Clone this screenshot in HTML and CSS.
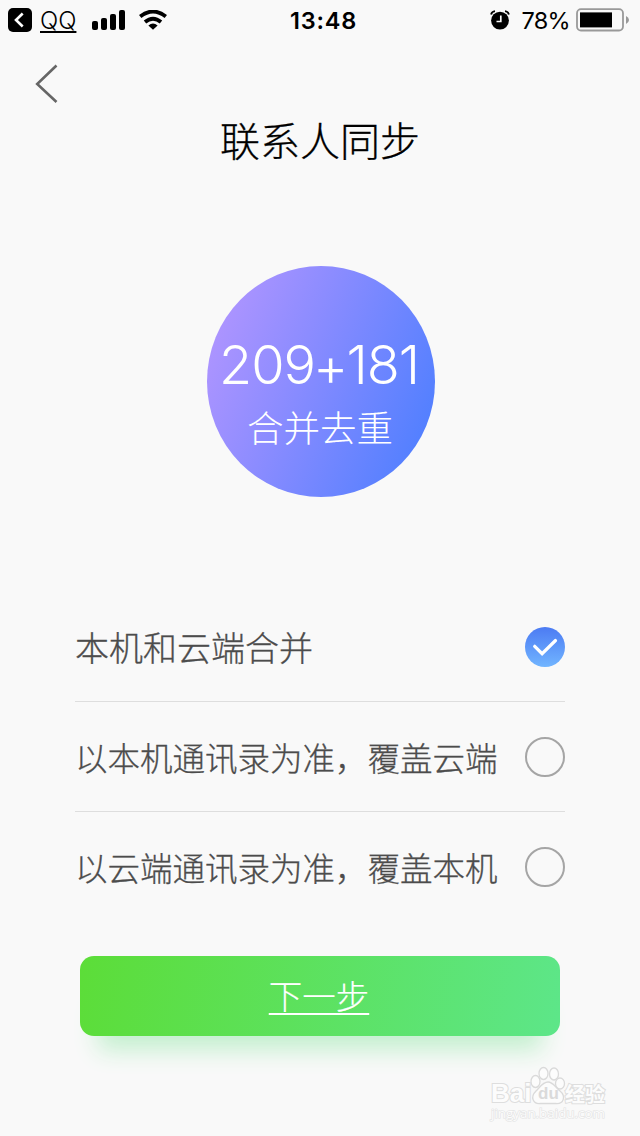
FILE: index.html
```html
<!DOCTYPE html>
<html lang="zh-CN">
<head>
  <meta charset="UTF-8">
  <meta name="viewport" content="width=device-width, initial-scale=1.0">
  <title>联系人同步</title>
  <link rel="stylesheet" href="styles.css">
</head>
<body>

  <div class="status">
    <div class="status-left">
      <svg class="icon-app" width="24" height="24" viewBox="0 0 24 24">
        <rect width="24" height="24" rx="5"/>
        <path d="M14.7 5.5L8 12l6.7 6.5" fill="none" stroke="#fff" stroke-width="2.6"/>
      </svg>
      <a class="qq">QQ</a>
      <svg class="icon-signal" width="34" height="20" viewBox="0 0 34 20">
        <rect x="0" y="11" width="6" height="9" rx="2"/>
        <rect x="9" y="8" width="6" height="12" rx="2"/>
        <rect x="18" y="4" width="6" height="16" rx="2"/>
        <rect x="27" y="0" width="6" height="20" rx="2"/>
      </svg>
      <svg class="icon-wifi" width="28" height="20" viewBox="0 0 28 20">
        <path d="M1.2 6.6Q14-3.6 26.8 6.6M6 12Q14 5.4 22 12" fill="none" stroke="#000" stroke-width="3.8"/>
        <path d="M9.4 15.4Q14 11.4 18.6 15.4L14 19.8Z"/>
      </svg>
    </div>
    <div class="time">13:48</div>
    <div class="status-right">
      <svg class="icon-alarm" width="20" height="20" viewBox="0 0 20 20">
        <circle cx="10" cy="10.6" r="8.9"/>
        <path d="M1 4.5Q2 1.6 5 1.2M15 1.2Q18 1.6 19 4.5" fill="none" stroke="#000" stroke-width="1.8"/>
        <path d="M10.8 5.5v6H6.5" fill="none" stroke="#f9f9f9" stroke-width="1.7"/>
      </svg>
      <span class="percent">78%</span>
      <svg class="icon-battery" width="54" height="24" viewBox="0 0 54 24">
        <rect x="1" y="1.2" width="46" height="21.3" rx="4" fill="none" stroke="#999" stroke-width="1.8"/>
        <rect x="4" y="4.4" width="32" height="15"/>
        <path d="M50 8q3 1.5 3 4t-3 4z" fill="#999"/>
      </svg>
    </div>
  </div>

  <div class="nav">
    <svg width="24" height="40" viewBox="0 0 24 40">
      <path d="M21.5 1.5L2.2 20l19.3 18" fill="none" stroke="#666" stroke-width="2.6"/>
    </svg>
  </div>

  <h1 class="title">联系人同步</h1>

  <div class="circle">
    <div class="count">209<span class="plus">+</span>181</div>
    <div class="label">合并去重</div>
  </div>

  <ul class="list">
    <li class="item item-first">
      <span>本机和云端合并</span>
      <i class="radio checked">
        <svg width="40" height="40" viewBox="0 0 40 40">
          <path d="M9.7 19.3l7.4 7.4L30.5 13.5" fill="none" stroke="#fff" stroke-width="3.2" stroke-linecap="round"/>
        </svg>
      </i>
    </li>
    <li class="item">
      <span>以本机通讯录为准，覆盖云端</span>
      <i class="radio"></i>
    </li>
    <li class="item">
      <span>以云端通讯录为准，覆盖本机</span>
      <i class="radio"></i>
    </li>
  </ul>

  <a class="btn"><span>下一步</span></a>

  <div class="watermark">
    <div class="mark-top">
      <span class="mark-bai">Bai</span>
      <span class="mark-paw">
        <svg width="38" height="40" viewBox="0 0 38 40">
          <ellipse cx="6.5" cy="16.5" rx="4.5" ry="6"/>
          <ellipse cx="14.5" cy="8.5" rx="4.5" ry="6"/>
          <ellipse cx="25" cy="9" rx="4.5" ry="6"/>
          <ellipse cx="31" cy="18.5" rx="4.5" ry="5.5"/>
          <path d="M19 17C14 17 11 22 7 26C1 32 4 39 11 38.5H27C35 39 37 31 31 26C26 22 24 17 19 17Z"/>
        </svg>
        <span class="mark-du">du</span>
      </span>
      <span class="mark-cn">经验</span>
    </div>
    <div class="mark-url">jingyan.baidu.com</div>
  </div>

</body>
</html>
```
FILE: styles.css
```css
*{
  margin:0;
  padding:0;
  box-sizing:border-box;
}
body{
  position:relative;
  width:640px;
  height:1136px;
  overflow:hidden;
  background:#f9f9f9;
  font-family:"Noto Sans CJK SC", sans-serif;
  font-weight:300;
  color:#000;
}
svg{
  display:block;
}

/* 状态栏 */
.status{
  display:grid;
  grid-template-columns:1fr auto 1fr;
  align-items:center;
  height:40px;
  padding:0 10px 0 8px;
  font-family:Inter, "Liberation Sans", sans-serif;
  font-size:24px;
  line-height:38px;
}
.status-left,
.status-right{
  display:flex;
  align-items:center;
}
.status-right{
  justify-content:flex-end;
}
.qq{
  width:36px;
  margin:0 16px 0 8px;
  padding-top:1px;
  text-decoration:underline;
  text-decoration-thickness:2px;
  text-underline-offset:2px;
  white-space:nowrap;
}
.icon-wifi{
  margin-left:13px;
}
.time{
  padding:1px 0 0 9px;
  font-size:23.5px;
  font-weight:600;
  letter-spacing:.8px;
}
.percent{
  margin:0 6px 0 12px;
  padding-top:2px;
  font-size:23.5px;
  font-weight:400;
  letter-spacing:-.7px;
}

.nav{
  height:64px;
  padding:24px 0 0 35px;
}
.title{
  margin-top:5px;
  font-size:40px;
  font-weight:300;
  line-height:60px;
  text-align:center;
  -webkit-text-stroke:.3px;
}

/* 圆 */
.circle{
  width:228px;
  height:231px;
  margin:97px auto 0 207px;
  padding-top:69px;
  border-radius:50%;
  background:linear-gradient(112deg, #b496ff 4%, #8c8cff 40%, #4b7eff 96%);
  color:#fff;
  text-align:center;
}
.count{
  padding-right:4px;
  font-family:Inter, sans-serif;
  font-size:54px;
  font-weight:300;
  line-height:60px;
  letter-spacing:-1px;
  white-space:nowrap;
}
.plus{
  display:inline-block;
  margin:0 -1px 0 -2px;
  transform:translateY(2px);
}
.label{
  margin-top:5px;
  padding-right:2px;
  font-size:36.5px;
  line-height:54px;
}

/* 选项 */
.list{
  margin:95px 75px 0;
  list-style:none;
}
.item{
  display:flex;
  align-items:center;
  justify-content:space-between;
  height:110px;
  border-bottom:1px solid #dedede;
  color:#4c4c4c;
  font-size:32.5px;
  white-space:nowrap;
}
.item span{
  -webkit-text-stroke:.3px;
}
.item-first{
  font-size:34px;
}
.item:last-child{
  border-bottom-color:transparent;
}
.radio{
  flex:none;
  width:40px;
  height:40px;
  border:2px solid #a5a5a5;
  border-radius:50%;
}
.checked{
  border:none;
  background:linear-gradient(#4c7bf3, #71b5ff);
}

.btn{
  display:block;
  position:relative;
  width:480px;
  height:80px;
  margin:34px auto 0;
  border-radius:14px;
  background:linear-gradient(100deg, #5cdd38, #5de689);
  box-shadow:0 32px 24px -18px #c3efce;
  color:#fff;
  font-size:33.5px;
  line-height:77px;
  text-align:center;
}
.btn span{
  margin-right:2px;
  text-decoration:underline;
  text-decoration-thickness:2px;
  text-underline-offset:4px;
  -webkit-text-stroke:.2px;
}

/* 水印 */
.watermark{
  position:absolute;
  left:491px;
  top:1065px;
  width:116px;
  color:#fcfcfc;
  white-space:nowrap;
  paint-order:stroke fill;
  -webkit-text-stroke:2px #dedede;
}
.mark-top{
  display:flex;
  align-items:flex-end;
  height:40px;
}
.mark-bai{
  width:38px;
  font:bold 26px/23px "Liberation Sans", sans-serif;
}
.mark-paw{
  position:relative;
  width:36px;
}
.mark-paw svg{
  fill:#fcfcfc;
  stroke:#dadada;
  stroke-width:1.3;
  paint-order:normal;
}
.mark-du{
  position:absolute;
  left:9px;
  bottom:3px;
  color:#dadada;
  font:bold 17px/17px "Liberation Sans", sans-serif;
  -webkit-text-stroke:0;
}
.mark-cn{
  font:bold 20px/23px "Noto Sans CJK SC", sans-serif;
}
.mark-url{
  font:13.4px/16px "Open Sans", sans-serif;
  -webkit-text-stroke:1.2px #e2e2e2;
}
```
